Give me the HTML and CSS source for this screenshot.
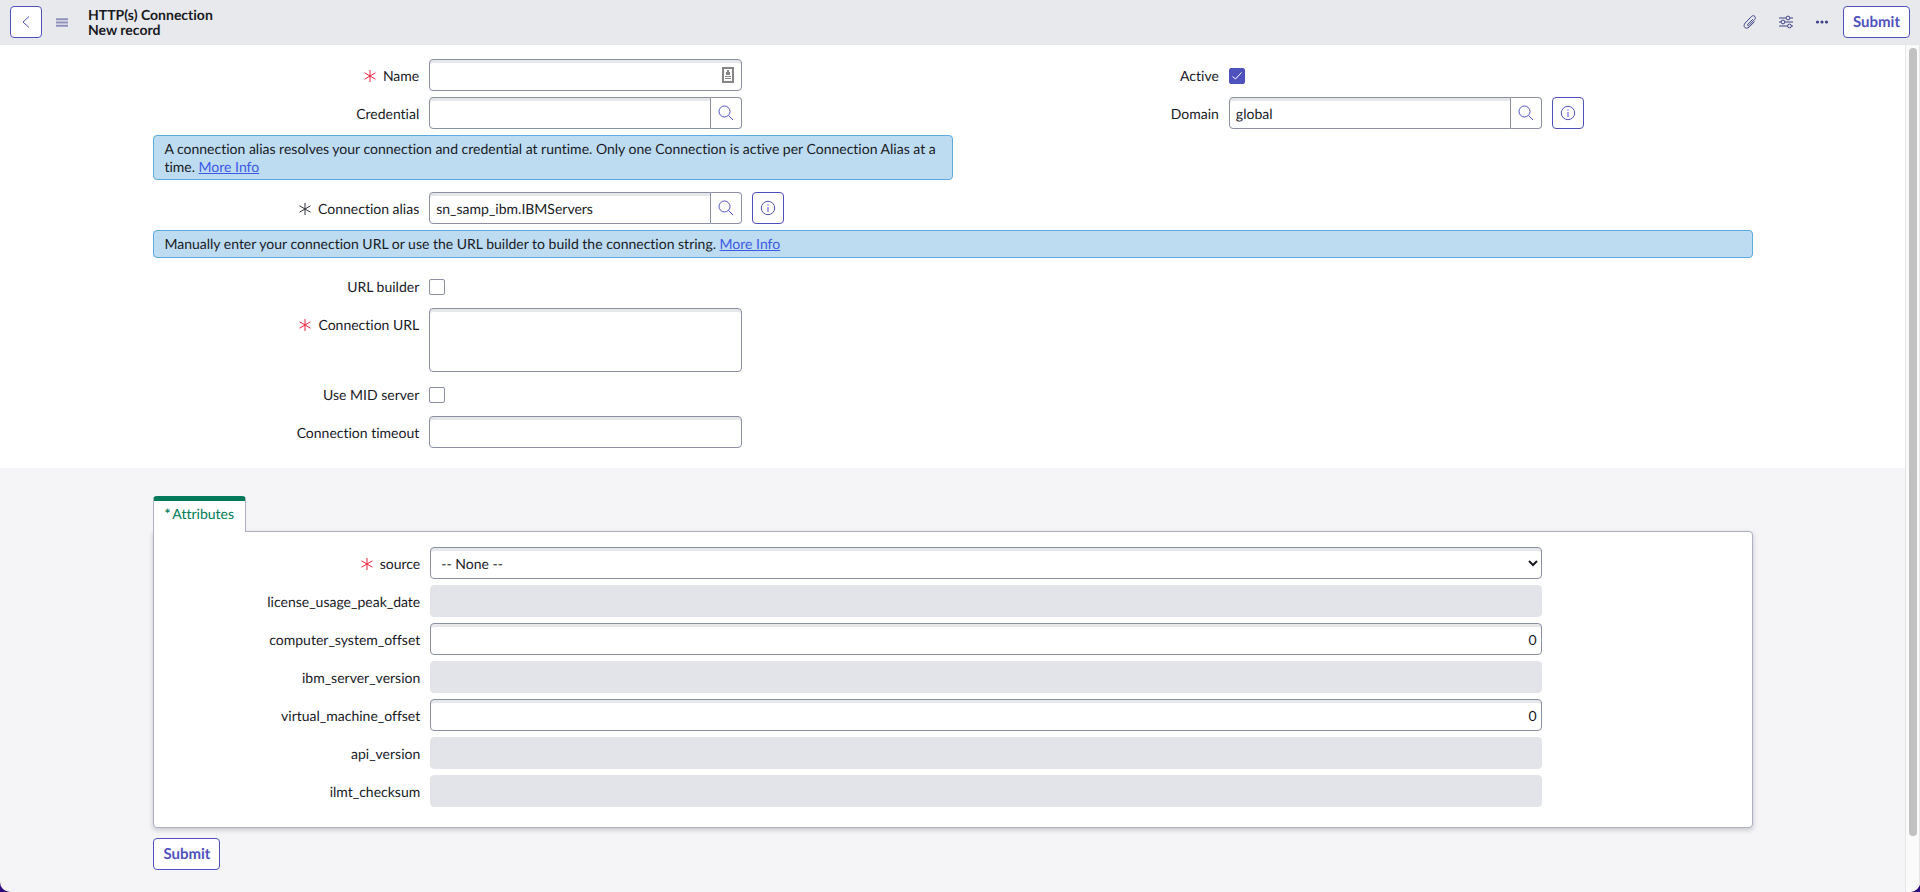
FILE: index.html
```html
<!DOCTYPE html>
<html lang="en">
<head>
<meta charset="utf-8">
<title>HTTP(s) Connection | New record</title>
<link rel="stylesheet" href="styles.css">
</head>
<body>
<svg class="sprite" aria-hidden="true">
  <symbol id="star" viewBox="0 0 12 12"><path d="M6 0V12M0.5 2.8L11.5 9.2M11.5 2.8L0.5 9.2"/></symbol>
  <symbol id="search" viewBox="0 0 16 16"><circle cx="6.5" cy="6.5" r="5.5"/><path d="M10.5 10.5L15 15"/></symbol>
  <symbol id="info" viewBox="0 0 16 16"><circle cx="8" cy="8" r="6.7"/><path d="M8 7V12M8 4.3V5.6"/></symbol>
</svg>
<div class="app">
  <header class="topbar">
    <button class="btn icon-btn" type="button" aria-label="Back"><svg class="icon" viewBox="0 0 16 16"><path d="M11 2.5L5 8L11 13.5"/></svg></button>
    <button class="tool menu" type="button" aria-label="Form menu"><svg viewBox="0 0 12 9"><path d="M0 1.2H12M0 4.5H12M0 7.8H12"/></svg></button>
    <h1 class="title">HTTP(s) Connection<br>New record</h1>
    <div class="tools">
      <button class="tool" type="button" aria-label="Attachments"><svg class="icon" viewBox="0 0 16 16"><path d="M10.8 5.2L5.8 10.4C5 11.3 6.1 12.3 6.9 11.5L12.6 5.6C14.6 3.3 12 .3 9.6 2.4L3.2 9C.2 12.5 3.9 16 7.2 13L12.5 7.6"/></svg></button>
      <button class="tool" type="button" aria-label="Personalize form"><svg class="icon" viewBox="0 0 16 16"><path d="M1 4H8M12 4H15M1 8H3M7 8H15M1 12H9.5M13.5 12H15"/><circle cx="10" cy="4" r="1.9"/><circle cx="5" cy="8" r="1.9"/><circle cx="11.5" cy="12" r="1.9"/></svg></button>
      <button class="tool" type="button" aria-label="More options"><svg class="icon dots" viewBox="0 0 16 16"><circle cx="3.5" cy="8" r="1.6"/><circle cx="8" cy="8" r="1.6"/><circle cx="12.5" cy="8" r="1.6"/></svg></button>
    </div>
    <button class="btn" type="submit" form="record">Submit</button>
  </header>
  <div class="body">
    <form class="content" id="record">
      <div class="main">
        <div class="columns">
          <div class="stack">
            <div class="field">
              <label for="name"><svg class="star required"><use href="#star"/></svg>Name</label>
              <div class="control with-badge"><input class="box" id="name" type="text"><svg class="badge" viewBox="0 0 12 16"><path class="frame" d="M1 1H11V15H1Z"/><path class="mark" d="M5 3H7V5H8V8H4V5H5ZM3 9H9V10H3ZM3 11H9V12H3Z"/></svg></div>
            </div>
            <div class="field">
              <label for="credential">Credential</label>
              <div class="control group"><input class="box" id="credential" type="text"><button class="lookup" type="button" aria-label="Look up credential"><svg class="icon"><use href="#search"/></svg></button></div>
            </div>
          </div>
          <div class="stack">
            <div class="field">
              <label for="active">Active</label>
              <div class="control"><input class="check" id="active" type="checkbox" checked></div>
            </div>
            <div class="field">
              <label for="domain">Domain</label>
              <div class="control group"><input class="box" id="domain" type="text" value="global"><button class="lookup" type="button" aria-label="Look up domain"><svg class="icon"><use href="#search"/></svg></button></div>
              <button class="btn icon-btn preview" type="button" aria-label="Preview domain"><svg class="icon"><use href="#info"/></svg></button>
            </div>
          </div>
        </div>
        <div class="columns notice">
          <p class="message">A connection alias resolves your connection and credential at runtime. Only one Connection is active per Connection Alias at a time. <a href="#">More Info</a></p>
        </div>
        <div class="columns alias">
          <div class="field">
            <label for="alias"><svg class="star"><use href="#star"/></svg>Connection alias</label>
            <div class="control group"><input class="box" id="alias" type="text" value="sn_samp_ibm.IBMServers"><button class="lookup" type="button" aria-label="Look up connection alias"><svg class="icon"><use href="#search"/></svg></button></div>
            <button class="btn icon-btn preview" type="button" aria-label="Preview connection alias"><svg class="icon"><use href="#info"/></svg></button>
          </div>
        </div>
        <p class="message notice">Manually enter your connection URL or use the URL builder to build the connection string. <a href="#">More Info</a></p>
        <div class="columns alias">
          <div class="stack">
            <div class="field">
              <label for="builder">URL builder</label>
              <div class="control"><input class="check" id="builder" type="checkbox"></div>
            </div>
            <div class="field">
              <label for="url"><svg class="star required"><use href="#star"/></svg>Connection URL</label>
              <div class="control"><textarea class="box area" id="url"></textarea></div>
            </div>
            <div class="field">
              <label for="mid">Use MID server</label>
              <div class="control"><input class="check" id="mid" type="checkbox"></div>
            </div>
            <div class="field">
              <label for="timeout">Connection timeout</label>
              <div class="control"><input class="box" id="timeout" type="text"></div>
            </div>
          </div>
        </div>
      </div>
      <div class="lower">
        <div class="tabs" role="tablist"><button class="tab" type="button" role="tab" aria-selected="true"><span class="tab-star">*</span>Attributes</button></div>
        <section class="panel stack">
          <div class="field wide">
            <label for="source"><svg class="star required"><use href="#star"/></svg>source</label>
            <select class="box select" id="source"><option>-- None --</option></select>
          </div>
          <div class="field wide"><label for="peak">license_usage_peak_date</label><input class="box" id="peak" type="text" disabled></div>
          <div class="field wide"><label for="cso">computer_system_offset</label><input class="box number" id="cso" type="text" value="0"></div>
          <div class="field wide"><label for="isv">ibm_server_version</label><input class="box" id="isv" type="text" disabled></div>
          <div class="field wide"><label for="vmo">virtual_machine_offset</label><input class="box number" id="vmo" type="text" value="0"></div>
          <div class="field wide"><label for="api">api_version</label><input class="box" id="api" type="text" disabled></div>
          <div class="field wide"><label for="ilmt">ilmt_checksum</label><input class="box" id="ilmt" type="text" disabled></div>
        </section>
        <button class="btn" type="submit">Submit</button>
      </div>
    </form>
    <div class="track"><div class="thumb"></div></div>
  </div>
</div>
</body>
</html>
```
FILE: styles.css
```css
* { box-sizing: border-box; }

html { background: #2e0a80; }

body {
  margin: 0;
  color: #181a1f;
  font: 14px/18px Lato, sans-serif;
  font-variant-ligatures: none;
  text-rendering: geometricPrecision;
}

button, input, select, textarea {
  font: inherit;
  color: inherit;
  text-rendering: inherit;
}

.sprite { display: none; }

.app {
  display: flex;
  flex-direction: column;
  min-height: 100vh;
  overflow: hidden;
  background: #f5f5f8;
  border-radius: 0 0 10px 10px;
}

.topbar {
  display: flex;
  align-items: center;
  padding: 6px 10px;
  background: #e8e9ed;
  border-bottom: 1px solid #e4e5e9;
}

.title {
  flex: 1;
  margin: 0 0 0 6px;
  font-size: 14px;
  line-height: 15px;
  font-weight: 700;
}

.tools { display: flex; gap: 4px; margin-right: 5px; }

.btn {
  height: 32px;
  padding: 0 9px;
  border: 1px solid #4f52bd;
  border-radius: 4px;
  background: #fff;
  color: #4f52bd;
  font-size: 15px;
  font-weight: 700;
}

.icon-btn {
  display: flex;
  align-items: center;
  justify-content: center;
  width: 32px;
  padding: 0;
}

.icon {
  display: block;
  width: 16px;
  height: 16px;
  fill: none;
  stroke: currentColor;
  stroke-width: 1;
}

.tool {
  display: flex;
  align-items: center;
  justify-content: center;
  width: 32px;
  height: 32px;
  padding: 0;
  border: 0;
  background: none;
  color: #3f4285;
}

.dots { fill: currentColor; stroke: none; }

.menu { width: 40px; }
.menu svg { width: 12px; height: 9px; stroke: #8f90bd; stroke-width: 2; }

.body { display: flex; flex: 1; }

.content { flex: 1; min-width: 0; }

.main { padding: 14px 8% 20px calc(8% + 1px); background: #fff; }

.columns { display: grid; grid-template-columns: 1fr 1fr; }

.stack { display: flex; flex-direction: column; gap: 6px; }

.notice { margin-top: 6px; }
.alias { margin-top: 12px; }

.field {
  display: grid;
  grid-template-columns: 276fr 313fr 211fr;
  align-items: start;
}

.field.wide { grid-template-columns: 276fr 1112fr 210fr; }

.field label {
  display: flex;
  align-items: center;
  justify-content: flex-end;
  gap: 7px;
  padding: 8px 10px 6px 0;
}

.star { width: 12px; height: 12px; stroke: #30333c; stroke-width: 1; }
.required { stroke: #e8253f; }

.control { display: flex; min-height: 32px; }
.preview { margin-left: 10px; }

.box {
  width: 100%;
  min-width: 0;
  height: 32px;
  padding: 0 6px;
  border: 1px solid #8a8fa3;
  border-radius: 4px;
  background: #fff;
  box-shadow: inset 0 3px 0 #e6e7e9;
}

.box:disabled { border-color: #e3e4e9; background: #e3e4e9; box-shadow: none; }

.area { display: block; height: 64px; resize: none; }
.number { padding-right: 4px; text-align: right; }
.select { padding: 0 0 0 6px; }

.group .box { border-radius: 4px 0 0 4px; }

.lookup {
  display: flex;
  flex: none;
  align-items: center;
  justify-content: center;
  width: 31px;
  height: 32px;
  padding: 0;
  border: 1px solid #8a8fa3;
  border-left: 0;
  border-radius: 0 4px 4px 0;
  background: #fff;
  color: #4f52bd;
}

.with-badge { position: relative; }
.badge { position: absolute; top: 8px; right: 8px; width: 12px; height: 16px; }
.frame { fill: #fff; stroke: #858585; stroke-width: 2; }
.mark { fill: #858585; }

.check {
  appearance: none;
  width: 16px;
  height: 16px;
  margin: 9px 0 0;
  border: 1px solid #8a8fa3;
  border-radius: 2px;
  background: #fff;
}

.check:checked {
  border-color: #4f52bd;
  background: #4f52bd url("data:image/svg+xml,%3Csvg xmlns='http://www.w3.org/2000/svg' viewBox='0 0 14 14'%3E%3Cpath d='M2.5 7.5L5.5 10L11.5 3.5' fill='none' stroke='white'/%3E%3C/svg%3E");
}

.message {
  margin-bottom: 0;
  padding: 4px 10px;
  border: 1px solid #5cabe0;
  border-radius: 4px;
  background: #bddbf1;
}

.columns .message { margin-top: 0; padding-bottom: 3px; }
.message a { color: #3c59e7; }

.lower { padding: 28px 8% 22px calc(8% + 1px); }

.tabs { display: flex; }

.tab {
  height: 36px;
  margin-bottom: -1px;
  padding: 0 11px 6px 10px;
  border: 1px solid #acb0c0;
  border-top: 5px solid #007a58;
  border-bottom: 0;
  border-radius: 4px 4px 0 0;
  background: #fff;
  color: #007a58;
  position: relative;
}

.tab-star { margin-right: 2px; font-weight: 700; }

.panel {
  margin-bottom: 10px;
  padding: 15px 0 20px;
  border: 1px solid #acb0c0;
  border-radius: 0 4px 4px 4px;
  background: #fff;
  box-shadow: 0 2px 5px rgba(30, 32, 50, 0.22);
}

.track {
  width: 15px;
  padding: 3px 2px 56px 3px;
  border: 1px solid #e6e6e8;
  border-width: 0 1px;
  background: #fafafa;
}

.thumb { width: 8px; height: 100%; border-radius: 4px; background: #c1c1c1; }
```
